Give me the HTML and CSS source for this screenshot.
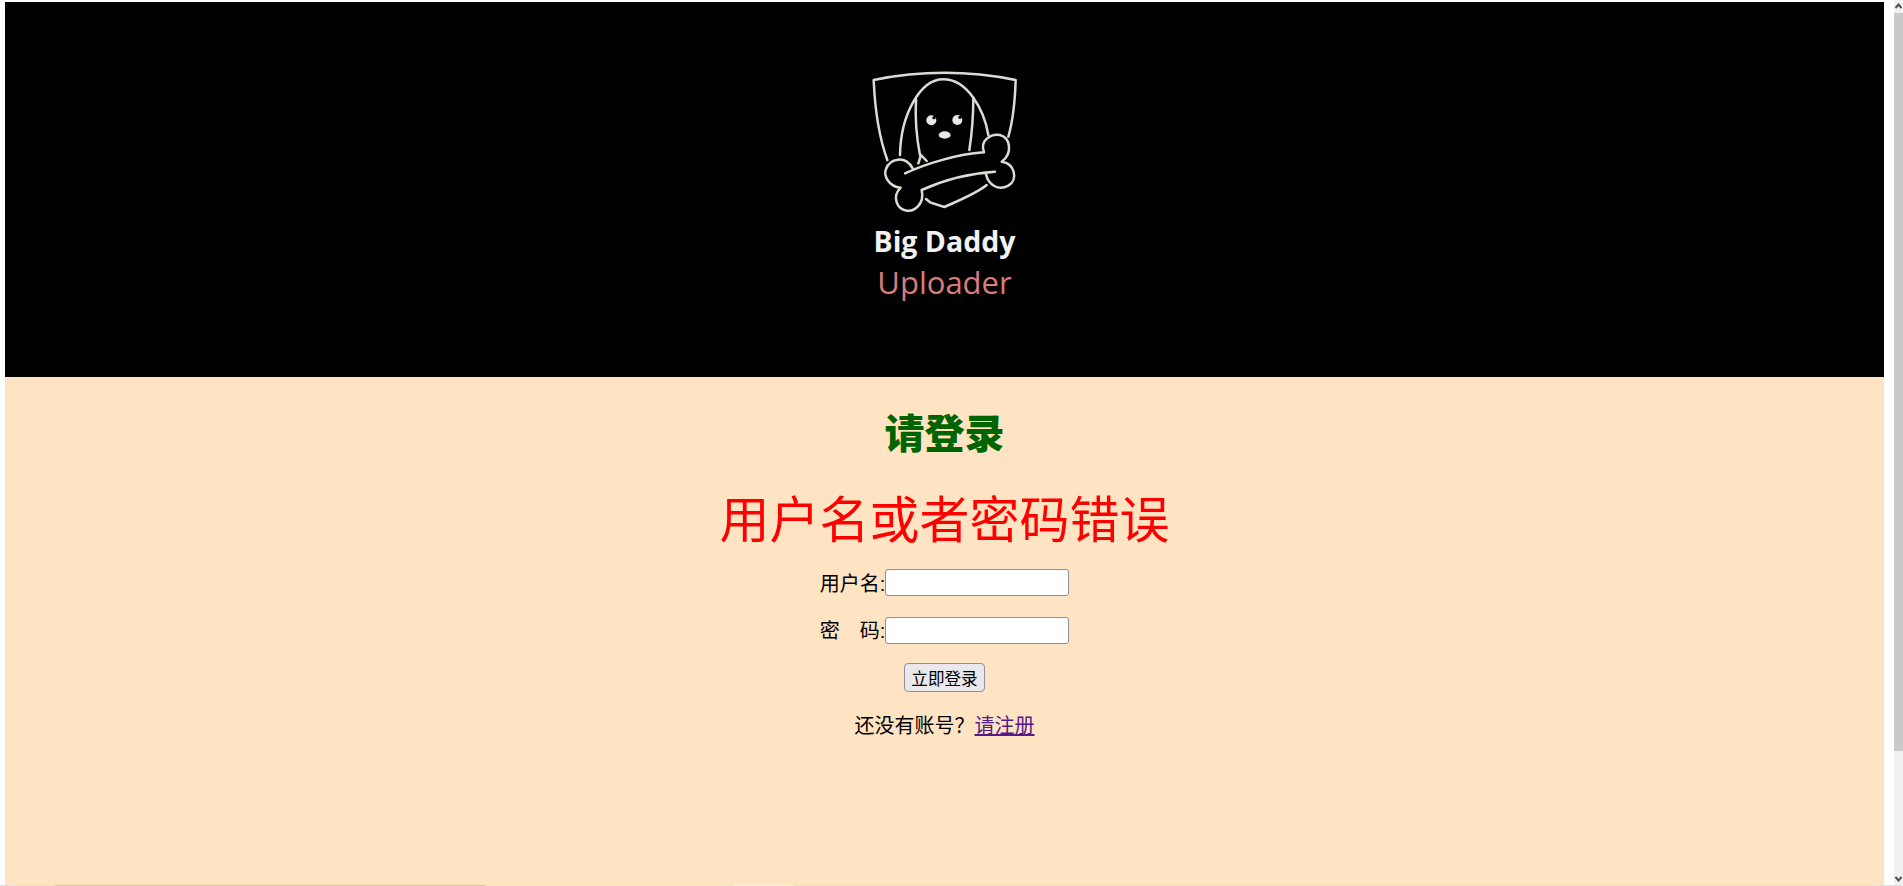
FILE: index.html
```html
<!DOCTYPE html>
<html lang="zh-CN">
<head>
 <meta charset="UTF-8">
 <meta name="viewport" content="width=device-width, initial-scale=1.0">
 <title>Big Daddy Uploader</title>
 <link rel="stylesheet" href="styles.css">
</head>
<body>
 <div class="page">
 <main class="content">
 <header class="banner">
 <svg class="logo" viewBox="0 0 480 480" width="160" height="160" fill="none" stroke="#dcdcd4" stroke-width="7.5" stroke-linecap="round" stroke-linejoin="round">
 <path d="M82 285 C60 225 46 160 41 45 Q253 2 467 45 C465 110 458 170 445 215"/>
 <path d="M120 270 C122 150 180 43 250 43 C320 43 372 130 385 210"/>
 <path d="M168 103 C165 160 172 230 180 270"/>
 <path d="M175 295 L183 270 L200 288"/>
 <path d="M340 98 C340 160 335 210 328 255"/>
 <path d="M135 325 C200 295 290 268 372 262 C358 225 395 205 420 210 C450 218 460 265 425 290 C465 295 475 345 445 362 C415 378 385 360 378 328"/>
 <path d="M405 320 C330 325 250 345 185 375 C195 420 160 440 140 437 C110 432 95 395 122 368 C85 365 70 330 78 312 C90 280 135 270 158 310"/>
 <path d="M198 402 L210 412 L253 426 C300 405 350 385 380 360"/>
 <g fill="#e8e8e0" stroke="none">
 <circle cx="214" cy="166" r="15"/>
 <circle cx="292" cy="165" r="15"/>
 <ellipse cx="254" cy="210" rx="18" ry="11"/>
 </g>
 <g fill="#000" stroke="none">
 <circle cx="222" cy="158" r="5"/>
 <circle cx="300" cy="157" r="5"/>
 </g>
 </svg>
 <div class="brand">Big Daddy</div>
 <div class="brand-sub">Uploader</div>
 </header>
 <section class="login">
 <h2 class="login-title">请登录</h2>
 <h1 class="login-error">用户名或者密码错误</h1>
 <form class="login-form">
 <p class="field field-row"><label class="field-label"><span class="field-name">用户名:</span><input type="text" class="text-input"></label></p>
 <p class="field field-row"><label class="field-label"><span class="field-name">密　码:</span><input type="password" class="text-input"></label></p>
 <p class="field"><button type="button" class="submit">立即登录</button></p>
 <p class="field field-note">还没有账号？<a class="register" href="#">请注册</a></p>
 </form>
 </section>
 </main>
 <aside class="scrollbar">
 <svg class="arrow" viewBox="0 0 9 13" width="9" height="13"><path d="M1.5 8 L4.5 4.5 L7.5 8" fill="none" stroke="#505050" stroke-width="2"/></svg>
 <div class="thumb"></div>
 <div class="track"></div>
 <svg class="arrow" viewBox="0 0 9 13" width="9" height="13"><path d="M1.5 5 L4.5 8.5 L7.5 5" fill="none" stroke="#505050" stroke-width="2"/></svg>
 </aside>
 </div>
 <div class="bottom-strip">
 <span class="strip-a"></span>
 <span class="strip-b"></span>
 <span class="strip-c"></span>
 <span class="strip-d"></span>
 <span class="strip-e"></span>
 </div>
</body>
</html>
```

FILE: styles.css
```css
html, body {
 margin: 0;
 padding: 0;
 height: 100%;
 overflow: hidden;
 background-color: #fff;
}
body {
 font-family: "Liberation Sans", "Noto Sans CJK SC", sans-serif;
 font-size: 20px;
 color: #000;
 display: flex;
 flex-direction: column;
}
.page {
 flex: 1;
 display: flex;
 padding-left: 5px;
 min-height: 0;
}
.content {
 width: 1879px;
 margin-top: 2px;
 background-color: #ffe4c4;
 text-align: center;
}
.banner {
 height: 375px;
 box-sizing: border-box;
 padding-top: 63px;
 background-color: #000;
 display: flex;
 flex-direction: column;
 align-items: center;
}
.logo {
 display: block;
 margin-right: 9px;
}
.brand {
 font-family: "Open Sans", "Noto Sans", sans-serif;
 font-weight: 700;
 font-size: 28.5px;
 line-height: 36px;
 margin-top: -2px;
 color: #f2f2f2;
}
.brand-sub {
 font-family: "Open Sans", "Noto Sans", sans-serif;
 font-size: 31px;
 line-height: 44px;
 margin-top: 1px;
 color: #d97c7c;
}
.login-title {
 margin: 32px 0 0;
 font-size: 40px;
 line-height: 50px;
 font-weight: 900;
 color: #006400;
}
.login-error {
 margin: 35px 0 0;
 font-size: 50px;
 line-height: 54px;
 font-weight: 400;
 color: #f00;
}
.login-form {
 margin: 0;
}
.field {
 margin: 20px 0 0;
 line-height: 27.5px;
 height: 27.5px;
}
.field-row {
 box-sizing: border-box;
 padding-top: 2px;
 display: flex;
 justify-content: center;
 align-items: center;
}
.field-label {
 display: flex;
 align-items: center;
}
.field-name {
 padding-top: 3px;
}
.field-note {
 margin-top: 22px;
}
.text-input {
 width: 184px;
 height: 27px;
 box-sizing: border-box;
 padding: 1px 2px;
 border: 1px solid #8f8f9d;
 border-radius: 3px;
 background-color: #fff;
}
.submit {
 width: 81px;
 height: 29px;
 padding: 0;
 border: 1px solid #8f8f9d;
 border-radius: 4px;
 background-color: #e9e9ed;
 font-family: inherit;
 font-size: 16.6px;
 color: #000;
 vertical-align: middle;
}
.register {
 color: #551a8b;
}
.scrollbar {
 width: 9px;
 margin-left: 10px;
 display: flex;
 flex-direction: column;
 background-color: #f1f1f1;
}
.arrow {
 display: block;
 flex: none;
}
.thumb {
 height: 738px;
 background-color: #c9c9c9;
}
.track {
 flex: 1;
}
.bottom-strip {
 height: 1px;
 flex: none;
 display: flex;
 background-color: #e8e8e8;
}
.strip-a {
 width: 55px;
 background-color: #e0e0e0;
}
.strip-b {
 width: 430px;
 background-color: #c8c8c8;
}
.strip-c {
 width: 248px;
 background-color: #e6e6e6;
}
.strip-d {
 width: 61px;
 background-color: #f5f0e6;
}
.strip-e {
 flex: 1;
 background-color: #e0e0e0;
}
```
